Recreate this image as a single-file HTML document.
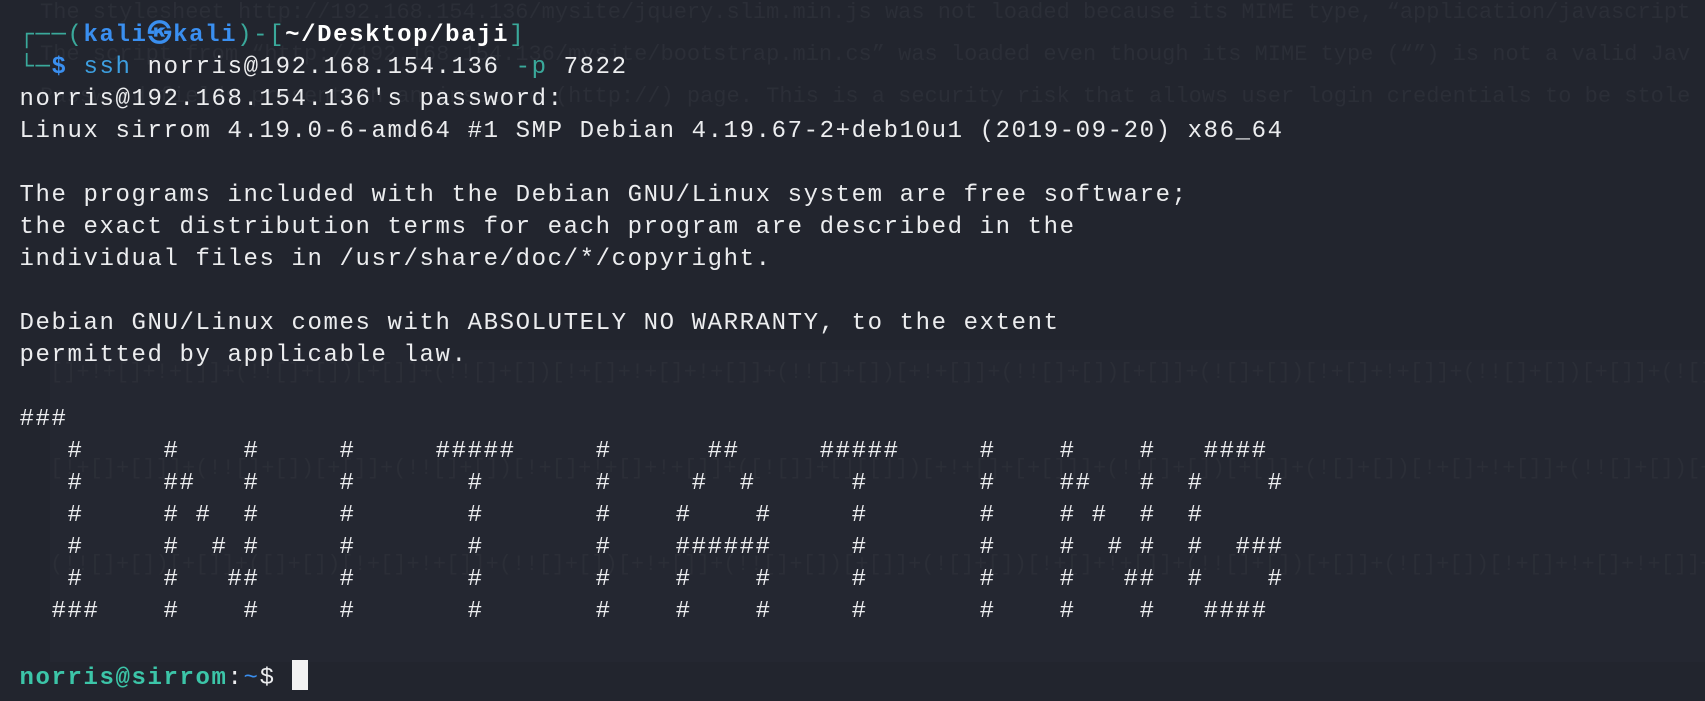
<!DOCTYPE html>
<html><head><meta charset="utf-8"><style>
html,body{margin:0;padding:0;width:1705px;height:701px;overflow:hidden;background:#22252e;}
.ghost{position:absolute;font-family:"Liberation Mono",monospace;font-size:22px;color:#2b2e37;white-space:pre;}
.panel{position:absolute;left:50px;top:350px;width:1655px;height:312px;background:#242731;}
pre{position:absolute;left:19.5px;top:20px;margin:0;font-family:"Liberation Mono","DejaVu Sans Mono",monospace;font-size:24px;letter-spacing:1.6px;line-height:32px;color:#ecedef;}
.t{color:#3aa99b}.b{color:#3a8ff0;font-weight:bold}.w{color:#fff;font-weight:bold}.s{color:#3d9fe0}
.g{color:#3cc5a8;font-weight:bold}.bl{color:#3a8ff0}
.cur{display:inline-block;width:16px;height:30px;background:#f2f2f2;vertical-align:-6px;}
</style></head><body>
<div class="panel"></div>
<div class="ghost" style="left:40px;top:0px">The stylesheet http://192.168.154.136/mysite/jquery.slim.min.js was not loaded because its MIME type, “application/javascript</div>
<div class="ghost" style="left:40px;top:42px">The script from “http://192.168.154.136/mysite/bootstrap.min.cs” was loaded even though its MIME type (“”) is not a valid Jav</div>
<div class="ghost" style="left:40px;top:84px">Password fields present on an insecure (http://) page. This is a security risk that allows user login credentials to be stole</div>
<div class="ghost" style="left:50px;top:360px">[]+!+[]+!+[]]+(!![]+[])[+[]]+(!![]+[])[!+[]+!+[]+!+[]]+(!![]+[])[+!+[]]+(!![]+[])[+[]]+(![]+[])[!+[]+!+[]]+(!![]+[])[+[]]+(![]</div>
<div class="ghost" style="left:50px;top:456px">[!+[]+[]]]+(!![]+[])[+[]]+(!![]+[])[!+[]+!+[]+!+[]]+([![]]+[][[]])[+!+[]+[+[]]]+(!![]+[])[+[]]+(![]+[])[!+[]+!+[]]+(!![]+[])[+!</div>
<div class="ghost" style="left:50px;top:552px">(!![]+[])[+[]]+([]+[])[!+[]+!+[]]+(!![]+[])[+!+[]]+(!![]+[])[+[]]+(![]+[])[!+[]+!+[]]+(!![]+[])[+[]]+(![]+[])[!+[]+!+[]+!+[]]+</div>
<pre><span class="t">┌──(</span><span class="b">kali㉿kali</span><span class="t">)-[</span><span class="w">~/Desktop/baji</span><span class="t">]</span>
<span class="t">└─</span><span class="b">$</span> <span class="s">ssh</span> norris@192.168.154.136 <span class="t">-p</span> 7822
norris@192.168.154.136's password: 
Linux sirrom 4.19.0-6-amd64 #1 SMP Debian 4.19.67-2+deb10u1 (2019-09-20) x86_64

The programs included with the Debian GNU/Linux system are free software;
the exact distribution terms for each program are described in the
individual files in /usr/share/doc/*/copyright.

Debian GNU/Linux comes with ABSOLUTELY NO WARRANTY, to the extent
permitted by applicable law.

###
   #     #    #     #     #####     #      ##     #####     #    #    #   ####
   #     ##   #     #       #       #     #  #      #       #    ##   #  #    #
   #     # #  #     #       #       #    #    #     #       #    # #  #  #
   #     #  # #     #       #       #    ######     #       #    #  # #  #  ###
   #     #   ##     #       #       #    #    #     #       #    #   ##  #    #
  ###    #    #     #       #       #    #    #     #       #    #    #   ####

<span class="g">norris@sirrom</span>:<span class="bl">~</span>$ <span class="cur"></span></pre>
</body></html>
